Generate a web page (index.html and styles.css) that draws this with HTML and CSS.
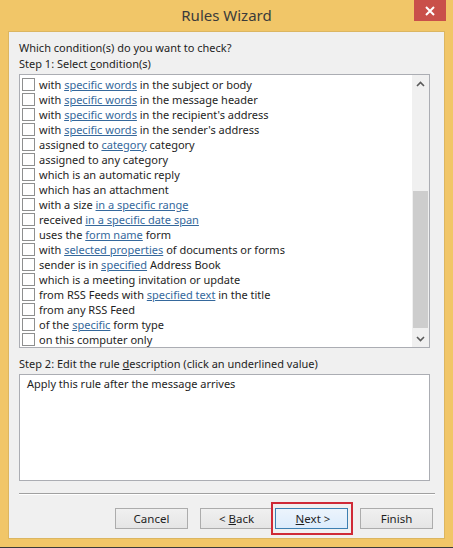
FILE: index.html
```html
<!DOCTYPE html>
<html lang="en">

<head>
  <meta charset="UTF-8">
  <meta name="viewport" content="width=device-width, initial-scale=1.0">
  <title>Rules Wizard</title>
  <link rel="stylesheet" href="styles.css">
</head>

<body>
  <div class="window">
    <div class="title-bar">
      <span class="title">Rules Wizard</span>
      <button class="close" aria-label="Close">
        <svg width="10" height="10" viewBox="0 0 10 10">
          <path d="M1 1 L9 9 M9 1 L1 9" stroke="#ffffff" stroke-width="2" />
        </svg>
      </button>
    </div>

    <div class="client">
      <p class="label">Which condition(s) do you want to check?</p>
      <p class="label">Step 1: Select <u>c</u>ondition(s)</p>

      <div class="list-box">
        <ul class="conditions">
          <li><span class="check"></span>with <a href="#">specific words</a> in the subject or body</li>
          <li><span class="check"></span>with <a href="#">specific words</a> in the message header</li>
          <li><span class="check"></span>with <a href="#">specific words</a> in the recipient's address</li>
          <li><span class="check"></span>with <a href="#">specific words</a> in the sender's address</li>
          <li><span class="check"></span>assigned to <a href="#">category</a> category</li>
          <li><span class="check"></span>assigned to any category</li>
          <li><span class="check"></span>which is an automatic reply</li>
          <li><span class="check"></span>which has an attachment</li>
          <li><span class="check"></span>with a size <a href="#">in a specific range</a></li>
          <li><span class="check"></span>received <a href="#">in a specific date span</a></li>
          <li><span class="check"></span>uses the <a href="#">form name</a> form</li>
          <li><span class="check"></span>with <a href="#">selected properties</a> of documents or forms</li>
          <li><span class="check"></span>sender is in <a href="#">specified</a> Address Book</li>
          <li><span class="check"></span>which is a meeting invitation or update</li>
          <li><span class="check"></span>from RSS Feeds with <a href="#">specified text</a> in the title</li>
          <li><span class="check"></span>from any RSS Feed</li>
          <li><span class="check"></span>of the <a href="#">specific</a> form type</li>
          <li><span class="check"></span>on this computer only</li>
        </ul>
        <div class="scrollbar">
          <div class="arrow">
            <svg width="9" height="6" viewBox="0 0 9 6">
              <polyline points="1,5 4.5,1.5 8,5" fill="none" stroke="#5a5a5a" stroke-width="1.6" />
            </svg>
          </div>
          <div class="track">
            <div class="thumb"></div>
          </div>
          <div class="arrow">
            <svg width="9" height="6" viewBox="0 0 9 6">
              <polyline points="1,1 4.5,4.5 8,1" fill="none" stroke="#5a5a5a" stroke-width="1.6" />
            </svg>
          </div>
        </div>
      </div>

      <p class="label step-two">Step 2: Edit the rule <u>d</u>escription (click an underlined value)</p>
      <div class="description">Apply this rule after the message arrives</div>

      <hr class="separator">

      <div class="buttons">
        <button class="btn cancel">Cancel</button>
        <button class="btn back">&lt; <u>B</u>ack</button>
        <span class="highlight">
          <button class="btn next">&nbsp;<u>N</u>ext &gt;</button>
        </span>
        <button class="btn finish">Finish</button>
      </div>
    </div>
  </div>
</body>

</html>
```

FILE: styles.css
```css
* {
  margin: 0;
  padding: 0;
  box-sizing: border-box;
}

body {
  background-color: #2b2b2b;
  font-family: "Noto Sans", "Open Sans", sans-serif;
  font-size: 11px;
  color: #1e1e1e;
}

.window {
  width: 453px;
  height: 548px;
  background-color: #f1c668;
  border-bottom: 1px solid #3a3a3a;
  padding: 0 8px 8px 8px;
  display: flex;
  flex-direction: column;
}

.title-bar {
  position: relative;
  height: 31px;
  display: flex;
  align-items: center;
  justify-content: center;
}

.title {
  font-size: 15px;
  color: #3b3b3b;
  margin-top: -1px;
}

.close {
  position: absolute;
  top: 0;
  right: -1px;
  width: 32px;
  height: 21px;
  border: none;
  background-color: #c9504a;
  display: flex;
  align-items: center;
  justify-content: center;
}

.client {
  flex: 1;
  background-color: #f0f0f0;
  border: 1px solid #dcb661;
  padding: 8px 14px 0 10px;
  display: flex;
  flex-direction: column;
}

.label {
  height: 16px;
  line-height: 16px;
}

.list-box {
  margin-top: 2px;
  height: 274px;
  border: 1px solid #abadb3;
  background-color: #ffffff;
  display: flex;
}

.conditions {
  flex: 1;
  list-style: none;
  padding: 2px 0 0 2px;
}

.conditions li {
  height: 15px;
  line-height: 15px;
  display: flex;
  align-items: center;
  white-space: pre;
}

.check {
  width: 13px;
  height: 13px;
  border: 1px solid #8e8f8f;
  background-color: #ffffff;
  margin-right: 4px;
  flex-shrink: 0;
}

.conditions a {
  color: #35689c;
  text-decoration: underline;
}

.scrollbar {
  width: 17px;
  background-color: #f0f0f0;
  display: flex;
  flex-direction: column;
}

.arrow {
  height: 17px;
  display: flex;
  align-items: center;
  justify-content: center;
}

.track {
  flex: 1;
  padding: 99px 1px 0 1px;
}

.thumb {
  height: 137px;
  background-color: #cdcdcd;
}

.step-two {
  margin-top: 8px;
}

.description {
  margin-top: 2px;
  height: 107px;
  border: 1px solid #abadb3;
  background-color: #ffffff;
  padding: 1px 7px;
  line-height: 16px;
}

.separator {
  margin: 12px -5px 0 0;
  border: none;
  border-top: 1px solid #a0a0a0;
  border-bottom: 1px solid #ffffff;
}

.buttons {
  margin-top: 13px;
  display: flex;
  justify-content: flex-end;
  margin-right: -3px;
}

.btn {
  width: 73px;
  height: 21px;
  font-family: inherit;
  font-size: 11.5px;
  color: #1e1e1e;
  border: 1px solid #acacac;
  background: linear-gradient(#f0f0f0, #e5e5e5);
}

.cancel {
  margin-right: 12px;
}

.back {
  margin-right: 2px;
}

.highlight {
  position: relative;
  margin-right: 12px;
  display: flex;
}

.highlight::after {
  content: "";
  position: absolute;
  top: -6px;
  bottom: -6px;
  left: -4px;
  right: -5px;
  border: 2px solid #cf2a36;
}

.next {
  border-color: #3c7fb1;
  background: linear-gradient(#ecf4fc, #dcecfc);
}
```
